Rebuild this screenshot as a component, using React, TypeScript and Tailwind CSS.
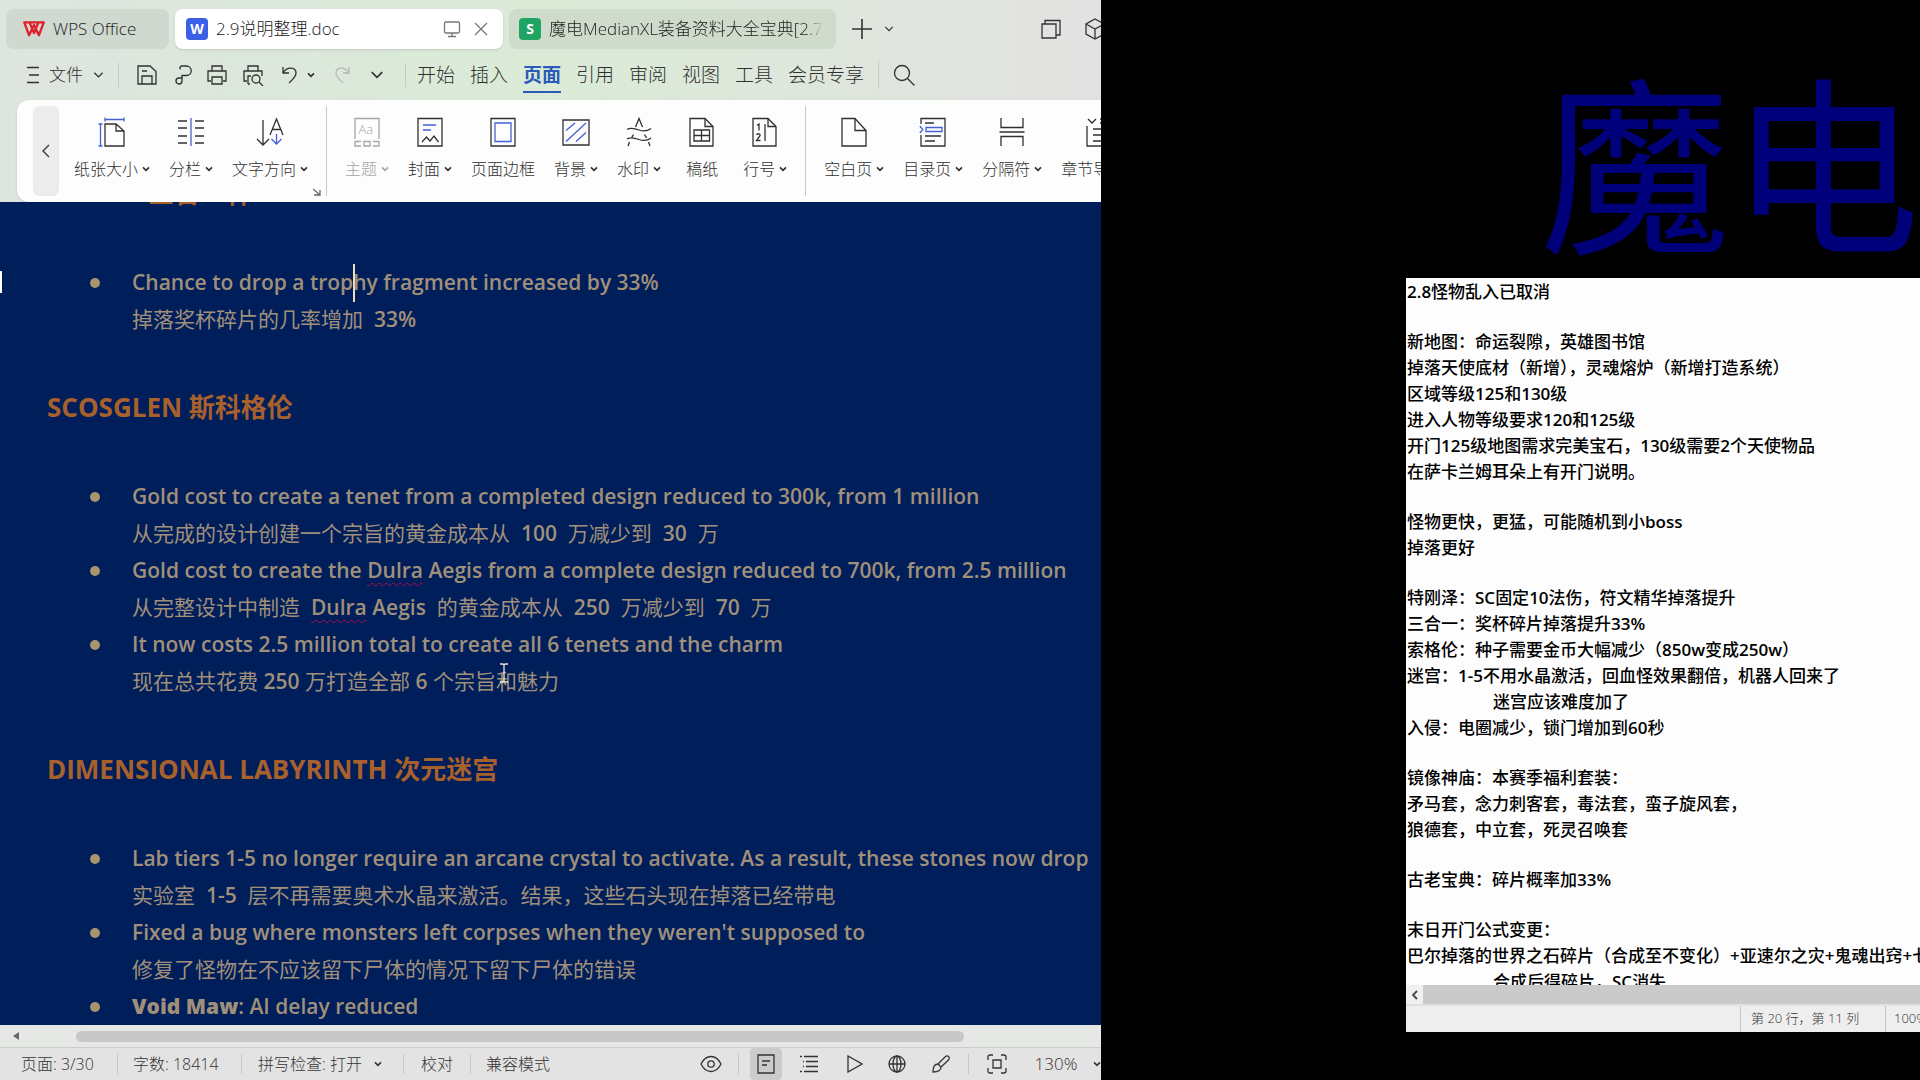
import React from "react";

type IconProps = { className?: string; children?: React.ReactNode; box?: string };

function Svg({ className = "", children, box = "0 0 28 30" }: IconProps) {
  return (
    <svg
      viewBox={box}
      className={"shrink-0 " + className}
      fill="none"
      stroke="currentColor"
      strokeWidth={1.3}
      aria-hidden="true"
    >
      {children}
    </svg>
  );
}

function Chevron({ className = "h-2 w-2", bold = false }: { className?: string; bold?: boolean }) {
  return (
    <Svg box="0 0 12 8" className={className}>
      <path d="M1.5 1.5 6 6l4.5-4.5" strokeWidth={bold ? 2.4 : 1.4} />
    </Svg>
  );
}

const BLUE = "#4460d8";

const menuTabs = ["开始", "插入", "页面", "引用", "审阅", "视图", "工具", "会员专享"];

type Tool = { label: string; menu: boolean; dim?: boolean; pad?: boolean; icon: React.ReactNode };

const pageOutline = <path d="M2 1.5h15l8 8V29H2z" />;

const sizeTools: Tool[] = [
  {
    label: "纸张大小",
    menu: true,
    icon: (
      <>
        <path d="M7 7h11l8 7v15H7zM18 7v7h8" />
        <path d="M7 2.500h19M7 .5v4M26 .5v4M2.500 7v22M.5 7h4M.5 29h4" stroke={BLUE} />
      </>
    ),
  },
  {
    label: "分栏",
    menu: true,
    icon: (
      <>
        <path d="M1 4h9M1 11h9M1 19h9M1 26h9M18 4h9M18 11h9M18 19h9M18 26h9" />
        <path d="M14 1v28" stroke={BLUE} />
      </>
    ),
  },
  {
    label: "文字方向",
    menu: true,
    icon: (
      <>
        <path d="M7 3v25M1 22l6 6 6-6M14 18l6.500-16L27 18M16.500 12.500h8" />
        <path d="M20.500 17v10M15.500 22l5 5 5-5" stroke={BLUE} />
      </>
    ),
  },
];

const designTools: Tool[] = [
  {
    label: "主题",
    menu: true,
    dim: true,
    icon: (
      <>
        <path d="M2 22V1.500h24V22M8 24.500H2V29h6M11 24.500h6V29h-6zM20 24.500h6V29h-6" />
        <text x="5.500" y="17" fontSize="13" fill="currentColor" stroke="none" fontFamily="Open Sans, sans-serif">
          Aa
        </text>
      </>
    ),
  },
  {
    label: "封面",
    menu: true,
    icon: (
      <>
        <path d="M2 1.500h24V29H2zM6 25l4.500-5 3.500 4 4-5 4.500 6" />
        <path d="M7 8h13M7 13h8" stroke={BLUE} />
      </>
    ),
  },
  {
    label: "页面边框",
    menu: false,
    icon: (
      <>
        <path d="M2 1.500h24V29H2z" />
        <path d="M6 6h16v18.500H6z" stroke={BLUE} />
      </>
    ),
  },
  {
    label: "背景",
    menu: true,
    icon: (
      <>
        <path d="M1 3h26v25H1z" />
        <path d="M4 13.500 13 6M4 24.500 24 6M14 24.500l10-9" stroke={BLUE} />
      </>
    ),
  },
  {
    label: "水印",
    menu: true,
    icon: (
      <path d="M10.500 10 14 1.500 17.500 10M8.500 17.500 6.500 21M19.500 17.500l2 3.500M4.500 25 3 29M23.500 25l1.500 4M2 12.500c4-2.500 8-1 12 .5s8 1.500 12-1.500M2 22c4-2.500 8-1 12 .5s8 1.500 12-1.500" />
    ),
  },
  {
    label: "稿纸",
    menu: false,
    pad: true,
    icon: (
      <>
        {pageOutline}
        <path d="M17 1.500v8h8M6 13h15.500v11H6zM6 18.500h15.500M13.500 13v11" />
      </>
    ),
  },
  {
    label: "行号",
    menu: true,
    icon: (
      <>
        {pageOutline}
        <path d="M17 1.500v8h8M14 7v17M6 8.500l2-1.500v6.500M5.500 18c1-2 4-1.500 3.500.7L5.500 23.500h4" />
      </>
    ),
  },
];

const insertTools: Tool[] = [
  {
    label: "空白页",
    menu: true,
    icon: (
      <>
        <path d="M2 1.500h13l11 12V29H2zM15 1.500v12h11" />
      </>
    ),
  },
  {
    label: "目录页",
    menu: true,
    icon: (
      <>
        <path d="M2 7V1.500h24V29H2V18M6 6h9M6 19h16M6 24h10" />
        <path d="M7 10.500h16v4H7zM.8 9l3 3.500-3 3.500" stroke={BLUE} />
      </>
    ),
  },
  {
    label: "分隔符",
    menu: true,
    icon: <path d="M3 1v9.500h22V1M1.500 15h25M3 29v-9.500h22V29" />,
  },
  {
    label: "章节导航",
    menu: true,
    icon: <path d="M3 2l4 4 4-4M2 9v20h24V2H15M8 12h14M8 18h18M8 24h18M15 6h8" />,
  },
];

function RibbonButton({ tool }: { tool: Tool }) {
  return (
    <button
      className={
        "flex shrink-0 flex-col items-center gap-2.5 whitespace-nowrap " +
        (tool.dim ? "text-[#a6a6a6]" : "text-[#303030]") +
        (tool.pad ? " px-1.5" : "")
      }
    >
      <Svg className="h-[30px] w-7">{tool.icon}</Svg>
      <span className="flex items-center gap-1 text-base leading-6">
        {tool.label}
        {tool.menu && <Chevron bold />}
      </span>
    </button>
  );
}

function RibbonGroup({ tools }: { tools: Tool[] }) {
  return (
    <div className="flex h-full items-start gap-[19px] pt-[11px]">
      {tools.map((t) => (
        <RibbonButton key={t.label} tool={t} />
      ))}
    </div>
  );
}

function TabStrip() {
  return (
    <div className="flex h-[49px] items-end gap-1.5 pl-1.5">
      <button className="flex h-10 w-[163px] shrink-0 items-center rounded-lg bg-[#cfd9cf] pl-[17px] text-[17px] text-[#222]">
        <svg viewBox="0 0 24 18" className="mr-2 h-4 w-[22px]" aria-hidden="true">
          <path
            d="M1 1.500h22L17.500 16 12 4.500 6.500 16z M7 1.500l5 12 5-12"
            fill="none"
            stroke="#e0202c"
            strokeWidth="2.600"
            strokeLinejoin="round"
          />
        </svg>
        WPS Office
      </button>
      <div className="flex h-10 w-[328px] shrink-0 items-center rounded-lg bg-white pl-[11px] pr-3.5 text-[17px] text-[#222] shadow">
        <span className="mr-2 flex h-[22px] w-[22px] items-center justify-center rounded-sm bg-[#3b5fe6] text-sm font-bold text-white">
          W
        </span>
        <span>2.9说明整理.doc</span>
        <Svg box="0 0 18 18" className="ml-auto h-[18px] w-[18px] text-[#777]">
          <path d="M3 2h12q1.500 0 1.500 1.500v8q0 1.500-1.500 1.500H3q-1.500 0-1.500-1.500v-8Q1.500 2 3 2zM9 13v3M5 16.500h8" />
        </Svg>
        <button aria-label="关闭" className="ml-3 text-[#777]">
          <Svg box="0 0 16 16" className="h-4 w-4">
            <path d="m2 2 12 12M14 2 2 14" />
          </Svg>
        </button>
      </div>
      <div className="flex h-10 w-[327px] shrink-0 items-center overflow-hidden rounded-lg bg-[#cfdccc] pl-2.5 pr-2.5 text-[17px] text-[#222]">
        <span className="mr-2 flex h-[22px] w-[22px] shrink-0 items-center justify-center rounded-sm bg-[#1fa463] text-sm font-bold text-white">
          S
        </span>
        <span className="overflow-hidden whitespace-nowrap [mask-image:linear-gradient(90deg,black_94%,transparent)]">
          魔电MedianXL装备资料大全宝典[2.7
        </span>
      </div>
      <div className="flex h-10 flex-1 items-center overflow-hidden pl-2.5 text-[#333]">
        <button aria-label="新建">
          <Svg box="0 0 20 20" className="h-5 w-5">
            <path d="M10 0v20M0 10h20" strokeWidth={1.6} />
          </Svg>
        </button>
        <button aria-label="更多标签" className="ml-3">
          <Chevron className="h-2 w-2.5" />
        </button>
        <Svg box="0 0 20 20" className="ml-auto h-5 w-5">
          <path d="M1 5h14v14H1zM4 5V1.500h15V16h-4" />
        </Svg>
        <Svg box="0 0 20 22" className="-mr-1 ml-6 h-[22px] w-5">
          <path d="m10 1 9 5v10l-9 5-9-5V6zM1 6l9 5 9-5M10 11v10" />
        </Svg>
      </div>
    </div>
  );
}

function Rule({ className = "" }: { className?: string }) {
  return <span className={"w-px shrink-0 bg-[#c3cbc3] " + className} />;
}

function MenuRow() {
  return (
    <nav className="flex h-[51px] items-center pl-[27px] text-[#303030]">
      <button className="flex items-center text-[17px]">
        <Svg box="0 0 12 18" className="mr-2.5 h-[18px] w-3">
          <path d="M0 1.500h12M2 9h10M0 16.500h12" />
        </Svg>
        文件
        <Chevron className="ml-2.5 h-2 w-[11px]" />
      </button>
      <Rule className="ml-3.5 h-6" />
      <div className="ml-[17px] flex w-[248px] items-center">
        <button aria-label="保存">
          <Svg box="0 0 22 22" className="h-[22px] w-[22px]">
            <path d="M2 2h12l6 5.500V20H2zM6 20v-8h10v8M6 7h5" />
          </Svg>
        </button>
        <button aria-label="输出" className="ml-3.5">
          <Svg box="0 0 22 22" className="h-[22px] w-[22px]">
            <path d="M8 5.500V4q0-2 2-2h4.500a4.700 4.700 0 0 1 0 9.500H10V17a3 3 0 1 1-3-3h3" />
          </Svg>
        </button>
        <button aria-label="打印" className="ml-3">
          <Svg box="0 0 22 22" className="h-[22px] w-[22px]">
            <path d="M6 7V2h10v5M5 17H2V7h18v10h-3M6 13h10v7H6z" />
          </Svg>
        </button>
        <button aria-label="打印预览" className="ml-3.5">
          <Svg box="0 0 22 22" className="h-[22px] w-[22px]">
            <path d="M6 7V2h10v5M5 17H2V7h18v5M6 20v-8h3M8 20H6" />
            <circle cx="14" cy="15" r="4" />
            <path d="m17 18 4 4" />
          </Svg>
        </button>
        <button aria-label="撤销" className="ml-[17px] flex items-center">
          <Svg box="0 0 18 20" className="h-5 w-[18px]">
            <path d="M2 2v6h6M2 8c4-7 13-6 13 0 0 4-4 7-7 10" />
          </Svg>
          <Chevron bold className="ml-2 h-2 w-2" />
        </button>
        <button aria-label="恢复" className="ml-[18px] text-[#b3bab3]">
          <Svg box="0 0 18 20" className="h-5 w-[18px]">
            <path d="M16 2v6h-6M16 8C12 1 3 2 3 8c0 4 4 7 7 10" />
          </Svg>
        </button>
        <button aria-label="更多" className="ml-auto">
          <Chevron className="h-2.5 w-3.5" />
        </button>
      </div>
      <Rule className="ml-[21px] h-6" />
      <div className="ml-[11px] flex gap-[15px] text-[19px]">
        {menuTabs.map((t) => (
          <button
            key={t}
            className={
              "border-b-2 pb-0.5 pt-1 leading-7 " +
              (t === "页面" ? "border-[#2b5ab8] font-bold text-[#2b5ab8]" : "border-transparent")
            }
          >
            {t}
          </button>
        ))}
      </div>
      <Rule className="ml-3.5 h-7" />
      <button aria-label="搜索" className="ml-3.5">
        <Svg box="0 0 22 22" className="h-[22px] w-[22px]">
          <circle cx="9" cy="9" r="7.500" />
          <path d="m14.500 14.500 7 7" />
        </Svg>
      </button>
    </nav>
  );
}

function Ribbon() {
  return (
    <div className="flex h-[102px] pl-[17px]">
      <div className="flex min-w-0 flex-1 overflow-hidden rounded-l-xl bg-[#fdfdfd] py-1.5 pl-4 shadow">
        <button
          aria-label="向左滚动"
          className="mr-[15px] flex w-[26px] shrink-0 items-center justify-center rounded-md bg-[#ececec] text-[#333]"
        >
          <Svg box="0 0 8 14" className="h-3.5 w-2">
            <path d="M7 1 1 7l6 6" />
          </Svg>
        </button>
        <RibbonGroup tools={sizeTools} />
        <div className="flex w-[18px] shrink-0 items-end justify-center">
          <Svg box="0 0 8 8" className="h-2 w-2 text-[#666]">
            <path d="m0 1 7 6M7 2v5H1" />
          </Svg>
        </div>
        <Rule className="mr-[18px]" />
        <RibbonGroup tools={designTools} />
        <Rule className="mx-[18px]" />
        <RibbonGroup tools={insertTools} />
      </div>
    </div>
  );
}

/* Latin runs are set heavier than the Chinese around them. */
function Mixed({ text }: { text: string }) {
  const runs = text.split(/([\x21-\x7e]+)/);
  return (
    <>
      {runs.map((run, i) =>
        run === "Dulra" ? (
          <span
            key={i}
            className="font-semibold underline decoration-[#a80d52] decoration-wavy decoration-1 underline-offset-4"
          >
            {run}
          </span>
        ) : i % 2 ? (
          <span key={i} className="font-semibold">
            {run}
          </span>
        ) : (
          run
        ),
      )}
    </>
  );
}

function Item({ children }: { children: React.ReactNode }) {
  return (
    <li className="flex">
      <span className="mr-8 mt-3.5 h-2.5 w-2.5 shrink-0 rounded-full bg-[#a8946f]" />
      <div className="whitespace-pre">{children}</div>
    </li>
  );
}

function Heading({ children }: { children: React.ReactNode }) {
  return <h2 className="mb-[53px] mt-[51px] pl-[47px] text-[26px] font-bold leading-9 text-[#a8602c]">{children}</h2>;
}

function DocumentPage() {
  return (
    <main className="relative min-h-0 flex-1 overflow-hidden bg-[#001e5a] text-[21px] font-normal leading-[37px] text-[#a0907a]">
      <span className="absolute left-0 top-[69px] h-[22px] w-0.5 bg-white" />
      <div className="-mt-[78px]">
        <Heading>
          <span className="pl-[101px]">三合一杯</span>
        </Heading>
        <ul className="pl-[90px]">
          <Item>
            <p>
              <Mixed text="Chance to drop a trop" />
              <span className="relative">
                <span className="absolute -top-1 left-0 h-[38px] w-0.5 bg-[#f0dcb4]" />
              </span>
              <Mixed text="hy fragment increased by 33%" />
            </p>
            <p>
              <Mixed text="掉落奖杯碎片的几率增加  33%" />
            </p>
          </Item>
        </ul>
        <Heading>SCOSGLEN 斯科格伦</Heading>
        <ul className="pl-[90px]">
          <Item>
            <p>
              <Mixed text="Gold cost to create a tenet from a completed design reduced to 300k, from 1 million" />
            </p>
            <p>
              <Mixed text="从完成的设计创建一个宗旨的黄金成本从  100  万减少到  30  万" />
            </p>
          </Item>
          <Item>
            <p>
              <Mixed text="Gold cost to create the Dulra Aegis from a complete design reduced to 700k, from 2.5 million" />
            </p>
            <p>
              <Mixed text="从完整设计中制造  Dulra Aegis  的黄金成本从  250  万减少到  70  万" />
            </p>
          </Item>
          <Item>
            <p>
              <Mixed text="It now costs 2.5 million total to create all 6 tenets and the charm" />
            </p>
            <p>
              <Mixed text="现在总共花费 250 万打造全部 6 个宗旨" />
              <span className="relative">
                <Svg box="0 0 8 20" className="absolute -top-1 left-1 h-5 w-2 text-[#f0e6d8]">
                  <path d="M0 1h3l1 1 1-1h3M4 2v16M0 19h3l1-1 1 1h3" />
                </Svg>
              </span>
              和魅力
            </p>
          </Item>
        </ul>
        <Heading>DIMENSIONAL LABYRINTH 次元迷宫</Heading>
        <ul className="pl-[90px]">
          <Item>
            <p>
              <Mixed text="Lab tiers 1-5 no longer require an arcane crystal to activate. As a result, these stones now drop" />
            </p>
            <p>
              <Mixed text="实验室  1-5  层不再需要奥术水晶来激活。结果，这些石头现在掉落已经带电" />
            </p>
          </Item>
          <Item>
            <p>
              <Mixed text="Fixed a bug where monsters left corpses when they weren't supposed to" />
            </p>
            <p>
              <Mixed text="修复了怪物在不应该留下尸体的情况下留下尸体的错误" />
            </p>
          </Item>
          <Item>
            <p>
              <strong className="font-extrabold">Void Maw</strong>
              <Mixed text=": AI delay reduced" />
            </p>
          </Item>
        </ul>
      </div>
    </main>
  );
}

function StatusBar() {
  return (
    <footer className="text-[#333]">
      <div className="flex h-[22px] items-center bg-[#e6e8e6] pl-3">
        <Svg box="0 0 8 8" className="h-2 w-2 text-[#666]">
          <path d="M7 0v8L1 4z" fill="currentColor" stroke="none" />
        </Svg>
        <span className="ml-14 mr-[137px] h-[11px] flex-1 rounded-full bg-[#c8c8c8]" />
      </div>
      <div className="flex h-[33px] items-center overflow-hidden border-t border-[#cdcfcd] bg-[#e3e3e3] pl-[21px] text-base">
        <span className="w-[96px]">页面: 3/30</span>
        <Rule className="h-5" />
        <span className="w-[123px] pl-[15px]">字数: 18414</span>
        <Rule className="h-5" />
        <button className="flex w-[161px] items-center pl-4">
          拼写检查: 打开
          <Chevron bold className="ml-3 h-2 w-2" />
        </button>
        <Rule className="h-5" />
        <button className="w-[66px]">校对</button>
        <Rule className="h-5" />
        <span className="pl-[15px]">兼容模式</span>
        <div className="ml-auto flex items-center">
          <button aria-label="护眼模式">
            <Svg box="0 0 22 18" className="h-[18px] w-[22px]">
              <path d="M1 9c5-10 15-10 20 0-5 10-15 10-20 0z" />
              <circle cx="11" cy="9" r="3.200" />
            </Svg>
          </button>
          <Rule className="ml-4 h-5" />
          <button aria-label="页面视图" className="ml-[11px] flex h-8 w-8 items-center justify-center rounded bg-[#cbcbcb]">
            <Svg box="0 0 18 20" className="h-5 w-[18px]">
              <path d="M1 1h16v18H1zM5 7h8M5 11h5" />
            </Svg>
          </button>
          <button aria-label="大纲" className="ml-[18px]">
            <Svg box="0 0 18 18" className="h-[18px] w-[18px]">
              <path d="M0 1.500h2M4 1.500h14M6 6.500h12M3 6.500h1M3 11.500h1M6 11.500h12M0 16.500h2M4 16.500h14" />
            </Svg>
          </button>
          <button aria-label="阅读" className="ml-[29px]">
            <Svg box="0 0 16 18" className="h-[18px] w-4">
              <path d="M1 1v16l14-8z" />
            </Svg>
          </button>
          <button aria-label="网页视图" className="ml-[25px]">
            <Svg box="0 0 18 18" className="h-[18px] w-[18px]">
              <circle cx="9" cy="9" r="8" />
              <ellipse cx="9" cy="9" rx="4" ry="8" />
              <path d="M9 1v16M1 9h16" />
            </Svg>
          </button>
          <button aria-label="书写" className="ml-[26px]">
            <Svg box="0 0 18 18" className="h-[18px] w-[18px]">
              <path d="M1 17c0-5 1-8 5-8l3 3c0 4-3 5-8 5zM6 9l7-7q2-2 3.500-.5t0 3.500L9 12" />
            </Svg>
          </button>
          <Rule className="ml-[18px] h-5" />
          <button aria-label="适合窗口" className="ml-[18px]">
            <Svg box="0 0 20 20" className="h-5 w-5">
              <path d="M1 6V3q0-2 2-2h3M14 1h3q2 0 2 2v3M19 14v3q0 2-2 2h-3M6 19H3q-2 0-2-2v-3M6 6h8v8H6z" />
            </Svg>
          </button>
          <button className="ml-6 flex items-center">
            <span className="w-[50px] text-[17px]">130%</span>
            <Chevron bold className="ml-3 h-2 w-2" />
          </button>
        </div>
      </div>
    </footer>
  );
}

const notes = [
  "2.8怪物乱入已取消",
  "",
  "新地图：命运裂隙，英雄图书馆",
  "掉落天使底材（新增），灵魂熔炉（新增打造系统）",
  "区域等级125和130级",
  "进入人物等级要求120和125级",
  "开门125级地图需求完美宝石，130级需要2个天使物品",
  "在萨卡兰姆耳朵上有开门说明。",
  "",
  "怪物更快，更猛，可能随机到小boss",
  "掉落更好",
  "",
  "特刚泽：SC固定10法伤，符文精华掉落提升",
  "三合一：奖杯碎片掉落提升33%",
  "索格伦：种子需要金币大幅减少（850w变成250w）",
  "迷宫：1-5不用水晶激活，回血怪效果翻倍，机器人回来了",
  "\t迷宫应该难度加了",
  "入侵：电圈减少，锁门增加到60秒",
  "",
  "镜像神庙：本赛季福利套装：",
  "矛马套，念力刺客套，毒法套，蛮子旋风套，",
  "狼德套，中立套，死灵召唤套",
  "",
  "古老宝典：碎片概率加33%",
  "",
  "末日开门公式变更：",
  "巴尔掉落的世界之石碎片（合成至不变化）+亚速尔之灾+鬼魂出窍+七",
  "\t合成后得碎片，SC消失",
];

function Notepad() {
  return (
    <section className="ml-[305px] flex flex-col overflow-hidden bg-[#fdfdfd]">
      <div className="h-[707px] overflow-hidden pl-px pt-px text-[17px] font-medium leading-[26px] text-black">
        {notes.map((line, i) => (
          <p
            key={i}
            className={"whitespace-nowrap " + (line ? "" : "h-6 ") + (line.startsWith("\t") ? "pl-[86px]" : "")}
          >
            <Mixed text={line.trim()} />
          </p>
        ))}
      </div>
      <div className="flex h-[19px] bg-[#cacaca]">
        <button aria-label="向左" className="flex w-[17px] items-center justify-center bg-[#f0f0f0] text-[#444]">
          <Svg box="0 0 6 10" className="h-2.5 w-1.5">
            <path d="M5 1 1 5l4 4" strokeWidth={1.8} />
          </Svg>
        </button>
      </div>
      <div className="flex h-7 items-center justify-end border-t-2 border-[#e0e0e0] bg-[#eee] text-[13px] font-light text-[#333]">
        <Rule className="h-full" />
        <span className="w-36 whitespace-nowrap pl-2.5">第 20 行，第 11 列</span>
        <Rule className="h-full" />
        <span className="w-[34px] overflow-hidden pl-2">100%</span>
      </div>
    </section>
  );
}

export default function App() {
  return (
    <div className="grid h-screen grid-cols-[1101fr_819fr] overflow-hidden bg-black font-['Open_Sans','Noto_Sans_CJK_SC',sans-serif]">
      <div className="flex min-w-0 flex-col overflow-hidden bg-linear-to-r from-[#dee5df] via-[#daebd7] to-[#e3e2e2] font-light">
        <TabStrip />
        <MenuRow />
        <Ribbon />
        <DocumentPage />
        <StatusBar />
      </div>
      <div className="min-w-0 overflow-hidden">
        <h1 className="flex h-[278px] items-center justify-end whitespace-nowrap pt-9 font-['Noto_Sans_CJK_SC',sans-serif] text-[190px] font-normal leading-none text-[#00007b]">
          魔电
        </h1>
        <Notepad />
      </div>
    </div>
  );
}
